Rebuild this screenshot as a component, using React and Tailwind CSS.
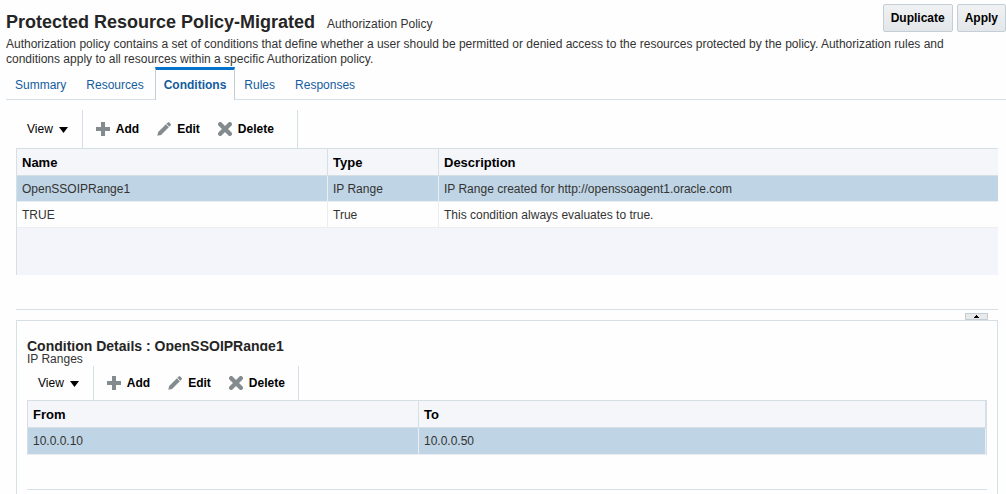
import React from "react";

function AddIcon() {
  return (
    <svg className="size-3.5 shrink-0" viewBox="0 0 14 14" fill="#848b8f" aria-hidden="true">
      <path d="M5 0h4v5h5v4H9v5H5V9H0V5h5z" />
    </svg>
  );
}

function EditIcon() {
  return (
    <svg className="size-3.5 shrink-0" viewBox="0 0 14 14" fill="#848b8f" aria-hidden="true">
      <path d="M0.3 13.8 1.2 10 8.9 2.3l2.9 2.9-7.7 7.7z" />
      <path d="M9.4 1.8 10.8 0.4a1 1 0 0 1 1.4 0l1.5 1.5a1 1 0 0 1 0 1.4L12.3 4.7z" />
    </svg>
  );
}

function DeleteIcon() {
  return (
    <svg className="size-3.5 shrink-0" viewBox="0 0 14 14" fill="none" stroke="#848b8f" strokeWidth="4.4" strokeLinecap="round" aria-hidden="true">
      <path d="M2.2 2.2 11.8 11.8M11.8 2.2 2.2 11.8" />
    </svg>
  );
}

function Toolbar({ className, actionsClassName }) {
  return (
    <div className={"flex " + className} role="toolbar">
      <button type="button" className="flex items-center gap-1.5 border-r border-[#d6dfe6] pr-3.5 pl-[11px] text-black">
        View
        <svg className="mt-0.5 h-1.5 w-[9px]" viewBox="0 0 9 6" aria-hidden="true">
          <path d="M0 0h9L4.5 6z" />
        </svg>
      </button>
      <div className={"flex items-center gap-[18px] border-r border-[#d6dfe6] pl-[13px] font-bold text-black " + actionsClassName}>
        <button type="button" className="flex items-center gap-1.5"><AddIcon />Add</button>
        <button type="button" className="flex items-center gap-1.5"><EditIcon />Edit</button>
        <button type="button" className="flex items-center gap-1.5"><DeleteIcon />Delete</button>
      </div>
    </div>
  );
}

function HeadCell({ className = "", children }) {
  return (
    <th
      scope="col"
      className={"h-[27px] border-b border-[#d6dfe6] bg-[#f4f6fa] px-[5px] pt-0.5 text-left text-[13px] leading-4 font-bold text-black " + className}
    >
      {children}
    </th>
  );
}

function Cell({ className = "h-[26px]", children }) {
  return <td className={"border-b border-[#ebedf0] px-[5px] pt-px " + className}>{children}</td>;
}

const tabs = ["Summary", "Resources", "Conditions", "Rules", "Responses"];

const conditions = [
  { name: "OpenSSOIPRange1", type: "IP Range", description: "IP Range created for http://openssoagent1.oracle.com", selected: true },
  { name: "TRUE", type: "True", description: "This condition always evaluates to true.", selected: false },
];

const actionButton =
  "h-7 rounded-xs border border-[#c4ced7] bg-linear-to-b from-[#f0f1f2] to-[#e3e7ea] px-[7px] font-bold text-black";

export default function App() {
  return (
    <div className="flex min-h-screen flex-col bg-[#fefefe] font-['Liberation_Sans',Arial,sans-serif] text-[12px] leading-[15px] text-[#333333]">
      <header className="pl-1.5">
        <div className="flex h-[37px] items-start justify-between">
          <div className="flex items-baseline gap-3 pt-2.5">
            <h1 className="text-lg leading-6 font-bold text-[#252525]">Protected Resource Policy-Migrated</h1>
            <span>Authorization Policy</span>
          </div>
          <div className="flex gap-1 pt-1">
            <button type="button" className={actionButton}>Duplicate</button>
            <button type="button" className={actionButton}>Apply</button>
          </div>
        </div>
        <p className="pr-9">
          Authorization policy contains a set of conditions that define whether a user should be permitted or denied
          access to the resources protected by the policy. Authorization rules and conditions apply to all resources
          within a specific Authorization policy.
        </p>
      </header>

      <nav className="ml-1.5 flex h-[33px] border-b border-[#d6dfe6]">
        {tabs.map((tab) =>
          tab === "Conditions" ? (
            <a key={tab} href="#conditions" aria-current="page" className="-mb-px border-x border-t-3 border-x-[#c4ced7] border-t-[#0572ce] bg-[#fefefe] px-2 pt-2 font-bold text-[#145c9e]">
              {tab}
            </a>
          ) : (
            <a key={tab} href={"#" + tab.toLowerCase()} className="pr-[11px] pl-[9px] pt-[11px] text-[#145c9e]">
              {tab}
            </a>
          )
        )}
      </nav>

      <main className="mt-2.5 mr-2 ml-4 flex flex-1 flex-col">
        <Toolbar className="h-[38px]" actionsClassName="pr-[23px]" />
        <div className="min-h-[127px] border-t border-l border-[#d6dfe6] bg-[#f4f5fa]">
          <table className="w-full table-fixed border-separate border-spacing-0">
            <colgroup>
              <col className="w-[311px]" />
              <col className="w-[111px]" />
              <col />
            </colgroup>
            <thead>
              <tr>
                <HeadCell className="border-r">Name</HeadCell>
                <HeadCell className="border-r">Type</HeadCell>
                <HeadCell>Description</HeadCell>
              </tr>
            </thead>
            <tbody>
              {conditions.map((row) => (
                <tr key={row.name} className={row.selected ? "bg-[#bfd4e4]" : "bg-[#fefefe]"}>
                  <Cell className="h-[26px] border-r">{row.name}</Cell>
                  <Cell className="h-[26px] border-r">{row.type}</Cell>
                  <Cell>{row.description}</Cell>
                </tr>
              ))}
            </tbody>
          </table>
        </div>

        <div className="mt-[34px] flex h-[11px] items-end justify-end border-t border-[#d6dfe6] pr-2.5">
          <button type="button" aria-label="Collapse details" className="flex h-[7px] w-[23px] items-center justify-center border border-[#c4ced7] bg-[#e7e9eb]">
            <svg className="h-[3px] w-[5px]" viewBox="0 0 5 3" shapeRendering="crispEdges" aria-hidden="true">
              <path d="M2 0h1v1h1v1h1v1H0V2h1V1h1z" />
            </svg>
          </button>
        </div>

        <section className="flex-1 border-x border-t border-[#d6dfe6] px-2.5 pt-5">
          <h2 className="flex h-2.5 items-center overflow-hidden text-sm leading-4 font-bold text-[#252525]">
            Condition Details : OpenSSOIPRange1
          </h2>
          <p className="pt-px leading-3.5">IP Ranges</p>
          <Toolbar className="h-[34px]" actionsClassName="pr-[13px]" />
          <div className="border border-b-0 border-[#d6dfe6]">
            <table className="w-full table-fixed border-separate border-spacing-0">
              <colgroup>
                <col className="w-[391px]" />
                <col />
              </colgroup>
              <thead>
                <tr>
                  <HeadCell className="border-r">From</HeadCell>
                  <HeadCell className="border-r">To</HeadCell>
                </tr>
              </thead>
              <tbody>
                <tr className="bg-[#bfd4e4]">
                  <Cell className="h-[27px] border-r">10.0.0.10</Cell>
                  <Cell className="h-[27px] border-r">10.0.0.50</Cell>
                </tr>
              </tbody>
            </table>
          </div>
          <hr className="mt-[34px] border-[#d6dfe6]" />
        </section>
      </main>
    </div>
  );
}
